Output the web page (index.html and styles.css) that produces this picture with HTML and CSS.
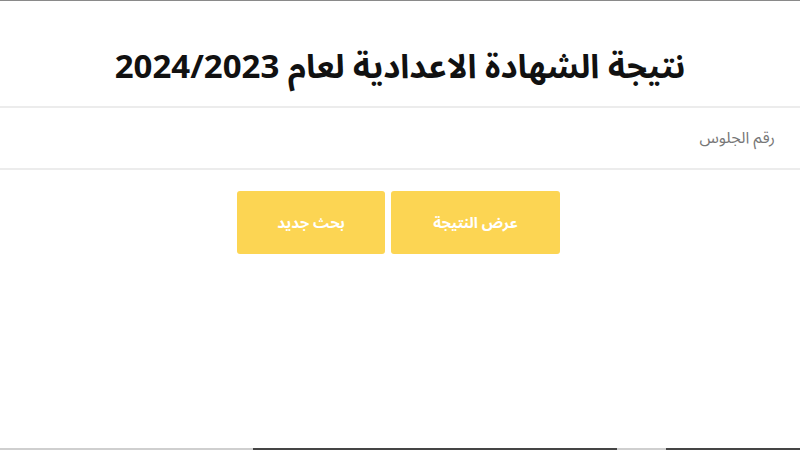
FILE: index.html
```html
<!DOCTYPE html>
<html lang="ar" dir="rtl">
<head>
  <meta charset="utf-8">
  <title>نتيجة الشهادة الاعدادية</title>
  <link rel="stylesheet" href="styles.css">
</head>
<body>
  <div class="page">
    <h1 class="title">نتيجة الشهادة الاعدادية لعام 2024/2023</h1>

    <div class="form-row">
      <input type="text" id="seatNumber" class="seat-input" placeholder="رقم الجلوس">
    </div>

    <div class="actions">
      <button class="btn">عرض النتيجة</button>
      <button class="btn btn-reset">بحث جديد</button>
    </div>
  </div>

  <div class="bottom-bar">
    <span class="bar-light bar-left"></span>
    <span class="bar-dark bar-thumb"></span>
    <span class="bar-light bar-mid"></span>
    <span class="bar-dark bar-right"></span>
  </div>
</body>
</html>
```
FILE: styles.css
```css
html, body {
  height: 100%;
}
body {
  margin: 0;
  font-family: "Noto Sans Arabic", "DejaVu Sans", sans-serif;
  color: #111;
  background: #fff;
  border-top: 1px solid #8a8a8a;
  box-sizing: border-box;
  display: flex;
  flex-direction: column;
}
.page {
  flex: 1;
}
.title {
  margin: 0;
  padding: 47px 0 18px;
  font-size: 33px;
  line-height: 40px;
  font-weight: bold;
  text-align: center;
  border-bottom: 2px solid #ececec;
}
.form-row {
  border-bottom: 2px solid #ececec;
}
.seat-input {
  display: block;
  width: 100%;
  height: 60px;
  box-sizing: border-box;
  border: none;
  outline: none;
  padding: 0 25px;
  font-family: inherit;
  font-size: 16px;
  color: #555;
  background: #fff;
  text-align: right;
}
.seat-input::placeholder {
  color: #777;
}
.actions {
  display: flex;
  justify-content: center;
  gap: 6px;
  margin-top: 21px;
  padding-right: 3px;
}
.btn {
  width: 169px;
  height: 63px;
  border: none;
  border-radius: 3px;
  background-color: #fcd553;
  color: #fff;
  font-family: inherit;
  font-size: 15px;
  font-weight: bold;
  cursor: pointer;
}
.btn-reset {
  width: 148px;
}
.bottom-bar {
  display: flex;
  direction: ltr;
  height: 2px;
}
.bar-light {
  background: #cfcfcf;
}
.bar-dark {
  background: #454545;
}
.bar-left {
  width: 253px;
}
.bar-thumb {
  width: 364px;
}
.bar-mid {
  width: 49px;
}
.bar-right {
  flex: 1;
}
```
